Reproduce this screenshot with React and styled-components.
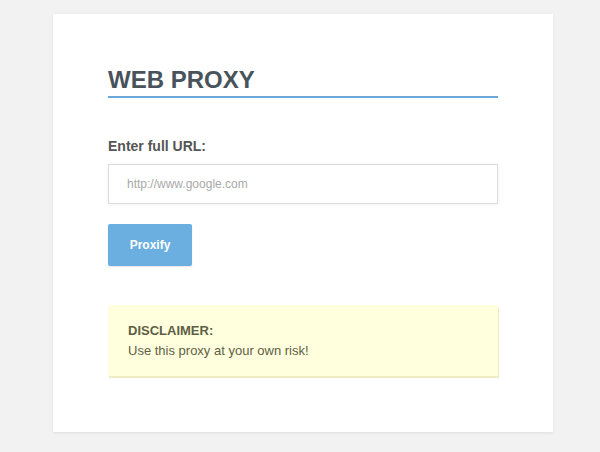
import React, { useState } from "react";
import styled, { createGlobalStyle } from "styled-components";

const GlobalStyle = createGlobalStyle`
  html, body {
    margin: 0;
    padding: 0;
    background: #f2f2f2;
    font-family: "Liberation Sans", Arial, sans-serif;
  }
`;

const Page = styled.div`
  padding: 14px 0 20px 6px;
`;

const Card = styled.div`
  width: 500px;
  box-sizing: border-box;
  margin: 0 auto;
  background: #fff;
  padding: 52px 55px 56px;
  box-shadow: 0 1px 3px rgba(0, 0, 0, 0.08);
`;

const Title = styled.h1`
  margin: 0;
  font-size: 24px;
  line-height: 28px;
  font-weight: bold;
  color: #48535c;
  padding-bottom: 2px;
  border-bottom: 2px solid #6aa9dc;
`;

const Form = styled.form`
  display: flex;
  flex-direction: column;
  align-items: flex-start;
  margin-top: 40px;
`;

const Label = styled.label`
  font-size: 14px;
  font-weight: bold;
  color: #555;
  line-height: 17px;
`;

const Input = styled.input`
  margin-top: 9px;
  width: 100%;
  box-sizing: border-box;
  height: 40px;
  border: 1px solid #dcdcdc;
  padding: 0 18px;
  font-family: inherit;
  font-size: 12px;
  color: #444;
  outline: none;
  box-shadow: 0 1px 4px rgba(0, 0, 0, 0.05);
  &::placeholder {
    color: #a9a9a9;
  }
`;

const Button = styled.button`
  margin-top: 20px;
  width: 84px;
  height: 42px;
  border: none;
  border-radius: 2px;
  background: #6aafe0;
  color: #fff;
  font-family: "Liberation Sans", Arial, sans-serif;
  font-weight: bold;
  font-size: 12px;
  cursor: pointer;
  box-shadow: 0 1px 2px rgba(0, 0, 0, 0.1);
`;

const Disclaimer = styled.div`
  margin-top: 39px;
  background: #fffedd;
  box-shadow: 1px 2px 0 #eeecc4;
  padding: 16px 20px 15px;
  color: #5e5e45;
  font-size: 13px;
  line-height: 20px;
`;

const DisclaimerTitle = styled.div`
  font-weight: bold;
`;

export default function App() {
  const [url, setUrl] = useState("");

  return (
    <Page>
      <GlobalStyle />
      <Card>
        <Title>WEB PROXY</Title>
        <Form onSubmit={(e) => e.preventDefault()}>
          <Label htmlFor="url">Enter full URL:</Label>
          <Input
            id="url"
            value={url}
            onChange={(e) => setUrl(e.target.value)}
            placeholder="http://www.google.com"
          />
          <Button type="submit">Proxify</Button>
        </Form>
        <Disclaimer>
          <DisclaimerTitle>DISCLAIMER:</DisclaimerTitle>
          Use this proxy at your own risk!
        </Disclaimer>
      </Card>
    </Page>
  );
}
